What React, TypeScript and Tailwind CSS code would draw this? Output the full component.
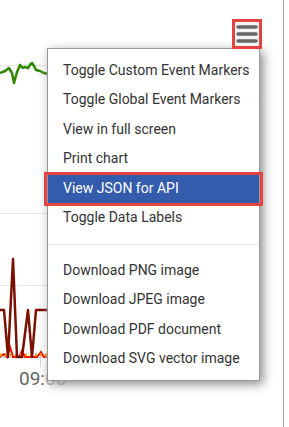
const menuTop = [
	"Toggle Custom Event Markers",
	"Toggle Global Event Markers",
	"View in full screen",
	"Print chart",
	"View JSON for API",
	"Toggle Data Labels",
];

const menuBottom = [
	"Download PNG image",
	"Download JPEG image",
	"Download PDF document",
	"Download SVG vector image",
];

function ChartSlice() {
	return (
		<svg width="80" height="427" viewBox="0 0 80 427" className="block">
			{/* grid lines */}
			<line x1="0" y1="65.5" x2="48" y2="65.5" stroke="#e6e6e6" />
			<line x1="0" y1="213.5" x2="48" y2="213.5" stroke="#e6e6e6" />
			<line x1="0" y1="285.5" x2="48" y2="285.5" stroke="#e6e6e6" />
			<line x1="0" y1="357.5" x2="48" y2="357.5" stroke="#ccd6eb" />
			<line x1="40.5" y1="357" x2="40.5" y2="367" stroke="#ccd6eb" />

			{/* top series */}
			<polyline
				points="0,73 5,71 9,68 12,73 14,83 17,72 20,65 23,68 25,67 28,68 30,65 32,63 34,66 36,70 40,71 44,73 48,74"
				fill="none"
				stroke="#2d8a00"
				strokeWidth="2.5"
				strokeLinejoin="round"
			/>

			{/* bottom series */}
			<polyline
				points="0,357 4,354 7,357 10,347 13,357 19,357 22,351 25,357 37,357 41,352 44,357 48,356"
				fill="none"
				stroke="#ee1100"
				strokeWidth="2"
			/>
			<line
				x1="0"
				y1="355"
				x2="48"
				y2="355"
				stroke="#ff9900"
				strokeWidth="3"
				strokeDasharray="2 3"
			/>
			<polyline
				points="0,310 4,310 8,357 13,259 17,357 22,357 28,310 32,357 36,310 48,310"
				fill="none"
				stroke="#7b0f00"
				strokeWidth="2.5"
				strokeLinejoin="round"
			/>

			<text
				x="19"
				y="385"
				fill="#666666"
				fontSize="19"
				fontFamily="Roboto, 'Liberation Sans', sans-serif"
			>
				09:<tspan fill="#b3b3b3">00</tspan>
			</text>
		</svg>
	);
}

function MenuItem({ label, active }: { label: string; active?: boolean }) {
	return (
		<div
			className={
				active
					? "h-[29.5px] flex items-center pl-[15px] bg-[#335cad] text-white"
					: "h-[29.5px] flex items-center pl-[15px] text-[#333333]"
			}
		>
			{label}
		</div>
	);
}

export default function App() {
	return (
		<div
			className="relative w-[289px] h-[427px] bg-white overflow-hidden flex"
			style={{ fontFamily: "Roboto, 'Liberation Sans', sans-serif" }}
		>
			<div className="w-[284px] h-full border-r border-[#a6a6a6]">
				<ChartSlice />
			</div>

			{/* export context menu */}
			<div className="absolute left-[47px] top-[48px] w-[213px] bg-white border border-[#999999] shadow-[3px_3px_10px_#888888] py-[6.5px] text-[14px]">
				{menuTop.map((label) => (
					<MenuItem key={label} label={label} active={label === "View JSON for API"} />
				))}
				<div className="my-[11px] h-px bg-[#e6e6e6]" />
				{menuBottom.map((label) => (
					<MenuItem key={label} label={label} />
				))}
			</div>

			{/* menu button */}
			<div className="absolute left-[232px] top-[19px] w-[30px] h-[30px] border-[3px] border-[#e5433f] bg-[#f4f4f4] flex items-center justify-center">
				<svg width="22" height="18" viewBox="0 0 22 18">
					<line x1="2" y1="2" x2="20" y2="2" stroke="#666666" strokeWidth="3.5" strokeLinecap="round" />
					<line x1="2" y1="9" x2="20" y2="9" stroke="#666666" strokeWidth="3.5" strokeLinecap="round" />
					<line x1="2" y1="16" x2="20" y2="16" stroke="#666666" strokeWidth="3.5" strokeLinecap="round" />
				</svg>
			</div>

			{/* annotation around highlighted item */}
			<div className="absolute left-[44px] top-[172px] w-[219px] h-[34px] border-[3px] border-[#e5433f] pointer-events-none" />
		</div>
	);
}
